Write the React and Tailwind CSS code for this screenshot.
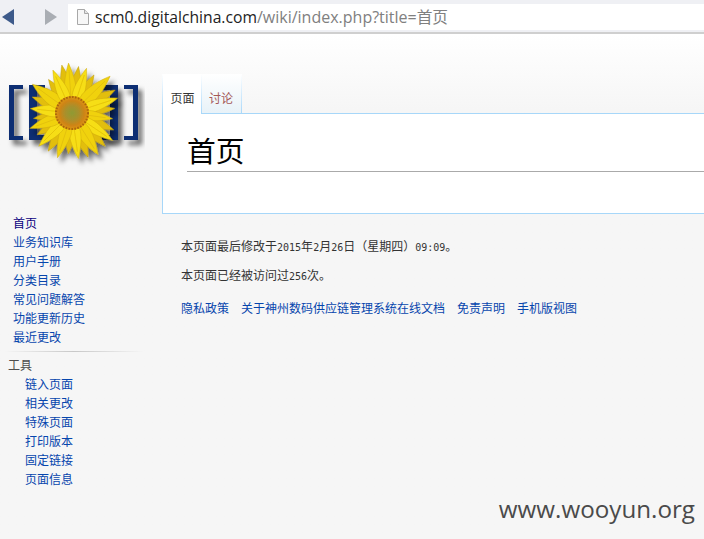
const cjk = { fontFamily: '"Noto Sans CJK SC", "Liberation Sans", sans-serif' };
const mono = { fontFamily: '"DejaVu Sans Mono", monospace' };

const navLinks = ["业务知识库", "用户手册", "分类目录", "常见问题解答", "功能更新历史", "最近更改"];
const toolLinks = ["链入页面", "相关更改", "特殊页面", "打印版本", "固定链接", "页面信息"];
const footerLinks = ["隐私政策", "关于神州数码供应链管理系统在线文档", "免责声明", "手机版视图"];

// angle, length, half width
const backPetals = [
  [8, 36, 7], [30, 33, 7], [62, 38, 7], [84, 32, 6], [112, 34, 7], [135, 36, 7],
  [160, 36, 7], [185, 30, 7], [212, 34, 7], [238, 30, 7], [262, 28, 6], [292, 32, 7], [325, 30, 7], [348, 38, 7],
];
const frontPetals = [
  [-4, 39, 7], [18, 36, 7], [46, 42, 8], [72, 37, 7], [98, 30, 6], [124, 38, 7], [148, 38, 8],
  [172, 35, 7], [198, 36, 7], [225, 36, 7], [250, 34, 7], [276, 31, 7], [306, 38, 8], [336, 36, 7],
];

const petalPath = (len, w) =>
  `M0 -10 C ${-w * 1.2} -${len * 0.35} ${-w} -${len * 0.8} 0 -${len + 11} C ${w} -${len * 0.8} ${w * 1.2} -${len * 0.35} 0 -10Z`;

function Logo() {
  return (
    <svg width="145" height="125" viewBox="0 0 145 125" className="block">
      <defs>
        <filter id="sh" x="-20%" y="-20%" width="150%" height="150%">
          <feDropShadow dx="4" dy="5" stdDeviation="2.5" floodColor="#000" floodOpacity="0.6" />
        </filter>
        <radialGradient id="seed">
          <stop offset="0%" stopColor="#8f9a32" />
          <stop offset="40%" stopColor="#a8902c" />
          <stop offset="75%" stopColor="#d08414" />
          <stop offset="100%" stopColor="#dd9a10" />
        </radialGradient>
      </defs>
      <g fill="#0b2f73" filter="url(#sh)">
        <path d="M9 35h14v4h-9v47h9v4H9z" />
        <path d="M29 35h16v5h-8v45h8v5H29z" />
        <path d="M102 35h16v55h-16v-5h8V40h-8z" />
        <path d="M124 35h14v55h-14v-4h9V39h-9z" />
      </g>
      <g filter="url(#sh)">
        {backPetals.map(([a, len, w], i) => (
          <path key={i} d={petalPath(len, w)} fill="#e2be08" stroke="#b8950a" strokeWidth="0.4" transform={`translate(72 63) rotate(${a})`} />
        ))}
        {frontPetals.map(([a, len, w], i) => (
          <g key={i} transform={`translate(72 63) rotate(${a})`}>
            <path d={petalPath(len, w)} fill={i % 2 ? "#f6de14" : "#f0d20c"} stroke="#c9a408" strokeWidth="0.4" />
            <path d={`M0 -14 L0 -${len + 4}`} stroke="#dcb808" strokeWidth="0.6" />
          </g>
        ))}
        <circle cx="72" cy="63" r="17" fill="url(#seed)" />
        <circle cx="72" cy="63" r="16" fill="none" stroke="#a8620c" strokeWidth="2" strokeDasharray="1.5 1.5" />
      </g>
    </svg>
  );
}

const Num = ({ children }) => (
  <span className="text-[10px]" style={mono}>{children}</span>
);

export default function App() {
  return (
    <div className="flex h-[539px] w-[704px] flex-col overflow-hidden bg-[#f6f6f6] text-[12px]" style={cjk}>
      {/* browser bar */}
      <div className="flex h-[34px] shrink-0 items-start border-b-2 border-[#cfcfcf] bg-[#eff0f4] pt-1">
        <div className="flex h-[26px] w-[68px] shrink-0 items-center gap-[31px] pl-[2px]">
          <svg width="12" height="16" viewBox="0 0 12 16"><path d="M12 0v16L0 8z" fill="#3d5a8a" /></svg>
          <svg width="12" height="16" viewBox="0 0 12 16"><path d="M0 0v16l12-8z" fill="#a9adb3" /></svg>
        </div>
        <div className="flex h-[26px] flex-1 items-center bg-white pl-2 text-[15.7px]">
          <svg width="14" height="16" viewBox="0 0 14 16" className="mr-[5px] shrink-0">
            <path d="M1.5.5h7l4 4v11h-11z" fill="#f7f7f7" stroke="#a8a8a8" />
            <path d="M8.5.5v4h4" fill="#e4e4e4" stroke="#a8a8a8" />
          </svg>
          <span className="whitespace-nowrap text-[#222]" style={{ fontFamily: '"Open Sans", "Noto Sans CJK SC", sans-serif' }}>
            scm0.digitalchina.com
            <span className="text-[16px] text-[#808080]">/wiki/index.php?title=</span>
            <span className="text-[#808080]">首页</span>
          </span>
        </div>
      </div>

      {/* page */}
      <div className="flex flex-1 bg-gradient-to-b from-white from-0% to-[#f6f6f6] to-[15%]">
        <aside className="w-[162px] shrink-0">
          <div className="h-[176px] pt-[16px]">
            <Logo />
          </div>
          <ul className="pl-[13px] leading-[19px] text-[#0645ad]">
            <li className="leading-[26px] text-[#0b0080]">首页</li>
            <div className="-mt-[4px]">
              {navLinks.map((t) => (
                <li key={t}>{t}</li>
              ))}
            </div>
          </ul>
          <div className="ml-[4px] mt-[5px] h-px w-[140px] bg-gradient-to-r from-[#f6f6f6] via-[#c8c8c8] to-[#f6f6f6]" />
          <div className="pl-2 pt-[3px] leading-[19px] text-[#4d4d4d]">工具</div>
          <ul className="pl-[25px] leading-[19px] text-[#0645ad]">
            {toolLinks.map((t) => (
              <li key={t}>{t}</li>
            ))}
          </ul>
        </aside>

        <main className="min-w-0 flex-1">
          <div className="flex h-[80px] items-end">
            <div className="h-[40px] w-px bg-gradient-to-b from-white to-[#a7d7f9]" />
            <div className="flex h-[40px] w-[38px] items-center justify-center bg-white pl-px pt-[8px] text-[#333]">页面</div>
            <div className="h-[40px] w-px bg-gradient-to-b from-white to-[#a7d7f9]" />
            <div className="flex h-[40px] w-[39px] items-center justify-center border-b border-[#a7d7f9] bg-gradient-to-b from-white to-[#e8f2f8] pr-px pt-[8px] text-[#a55858]">讨论</div>
            <div className="h-[40px] w-px bg-gradient-to-b from-white to-[#a7d7f9]" />
            <div className="flex-1 border-b border-[#a7d7f9]" />
          </div>
          <div className="-mt-px h-[101px] border-b border-l border-[#a7d7f9] bg-white pl-[24px] pt-[18px]">
            <h1 className="border-b border-[#aaaaaa] pb-[2px] text-[28.8px] leading-[38px] font-normal text-black">
              首页
            </h1>
          </div>
          <div className="pl-[19px] pt-[23px] text-[#333]">
            <p className="leading-[17px]">
              本页面最后修改于<Num>2015</Num>年<Num>2</Num>月<Num>26</Num>日（星期四）<Num>09:09</Num>。
            </p>
            <p className="mt-[10px] leading-[17px]">本页面已经被访问过<Num>256</Num>次。</p>
            <div className="mt-[14px] flex gap-3 leading-[18px] text-[#0645ad]">
              {footerLinks.map((t) => (
                <span key={t} className="whitespace-nowrap">{t}</span>
              ))}
            </div>
          </div>
          <div className="mt-[177px] pr-[9px] text-right text-[24.2px] leading-[30px] text-[#4a4a4a]" style={{ fontFamily: '"Open Sans", sans-serif' }}>
            www.wooyun.org
          </div>
        </main>
      </div>
    </div>
  );
}
